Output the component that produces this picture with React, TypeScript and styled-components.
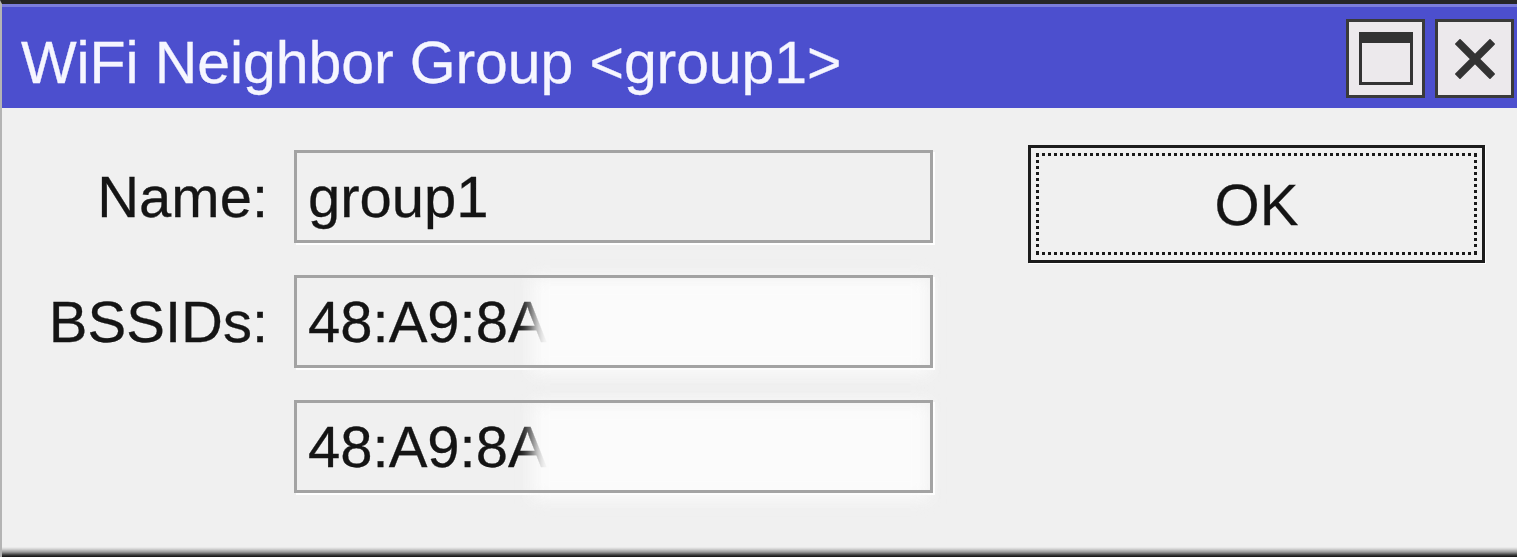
import React from "react";
import styled, { createGlobalStyle } from "styled-components";

const GlobalStyle = createGlobalStyle`
  html, body {
    margin: 0;
    padding: 0;
    background: #f0f0f0;
    overflow: hidden;
  }
  * {
    box-sizing: border-box;
  }
`;

const Window = styled.div`
  width: 1517px;
  height: 557px;
  display: flex;
  flex-direction: column;
  background: linear-gradient(
    to bottom,
    #f0f0f0 calc(100% - 10px),
    #d4d4d4 calc(100% - 8px),
    #9a9a9a calc(100% - 5px),
    #3a3a3a calc(100% - 2px),
    #111 100%
  );
  border-top: 4px solid #262626;
  border-left: 2px solid #b4b4b4;
  font-family: "Liberation Sans", Arial, sans-serif;
  color: #111;
  -webkit-text-stroke: 0.3px currentColor;
`;

const TitleBar = styled.div`
  height: 104px;
  flex-shrink: 0;
  display: flex;
  align-items: center;
  justify-content: space-between;
  padding: 0 3px 0 19px;
  background: #4c4fce;
  border-top: 3px solid #7b7dda;
`;

const Title = styled.span`
  color: #f6f6ff;
  font-size: 59px;
  letter-spacing: -0.1px;
  margin-top: 11px;
`;

const Controls = styled.div`
  display: flex;
  gap: 10px;
  margin-top: 2px;
`;

const ControlButton = styled.div`
  width: 79px;
  height: 79px;
  background: #ece9ec;
  border: 3px solid #3a3a3a;
  display: flex;
  align-items: center;
  justify-content: center;
`;

const Body = styled.div`
  flex: 1;
  display: flex;
  align-items: flex-start;
  padding-top: 35px;
`;

const Form = styled.div`
  display: grid;
  grid-template-columns: 266px 639px;
  column-gap: 26px;
  row-gap: 32px;
  margin-top: 7px;
`;

const Label = styled.span`
  justify-self: end;
  align-self: center;
  font-size: 58px;
  color: #151515;
`;

const Field = styled.div`
  position: relative;
  height: 93px;
  display: flex;
  align-items: center;
  padding-left: 14px;
  font-size: 58px;
  color: #141414;
  background: #f0f0f0;
  box-shadow: 2px 2px 0 #ffffff;
  grid-column: 2;

  &::after {
    content: "";
    position: absolute;
    inset: 0;
    border: 3px solid #a3a3a3;
    z-index: 2;
  }
`;

const Blur = styled.div`
  position: absolute;
  left: 238px;
  right: 4px;
  top: 2px;
  bottom: -6px;
  background: #fbfbfb;
  filter: blur(8px);
  z-index: 1;
`;

const OkButton = styled.div`
  position: relative;
  margin-left: 95px;
  margin-top: 2px;
  width: 457px;
  height: 118px;
  display: flex;
  align-items: center;
  justify-content: center;
  font-size: 58px;
  color: #141414;
  background: #f0f0f0;
  border: 3px solid #1c1c1c;
  box-shadow: 1px 1px 0 #ffffff;

  &::after {
    content: "";
    position: absolute;
    inset: 5px;
    border: 3px dotted #1a1a1a;
  }
`;

const MaxIcon = () => (
  <svg width="54" height="53" viewBox="0 0 54 53">
    <rect x="1.5" y="1.5" width="51" height="50" fill="none" stroke="#333" strokeWidth="3" />
    <rect x="1" y="1" width="52" height="10" fill="#333" />
  </svg>
);

const CloseIcon = () => (
  <svg width="40" height="40" viewBox="0 0 40 40">
    <path d="M5 5 L35 35 M35 5 L5 35" stroke="#333" strokeWidth="7.5" strokeLinecap="square" />
  </svg>
);

export default function App() {
  return (
    <>
      <GlobalStyle />
      <Window>
        <TitleBar>
          <Title>WiFi Neighbor Group &lt;group1&gt;</Title>
          <Controls>
            <ControlButton>
              <MaxIcon />
            </ControlButton>
            <ControlButton>
              <CloseIcon />
            </ControlButton>
          </Controls>
        </TitleBar>
        <Body>
          <Form>
            <Label>Name:</Label>
            <Field>group1</Field>
            <Label>BSSIDs:</Label>
            <Field>
              48:A9:8A
              <Blur />
            </Field>
            <Field>
              48:A9:8A
              <Blur />
            </Field>
          </Form>
          <OkButton>OK</OkButton>
        </Body>
      </Window>
    </>
  );
}
